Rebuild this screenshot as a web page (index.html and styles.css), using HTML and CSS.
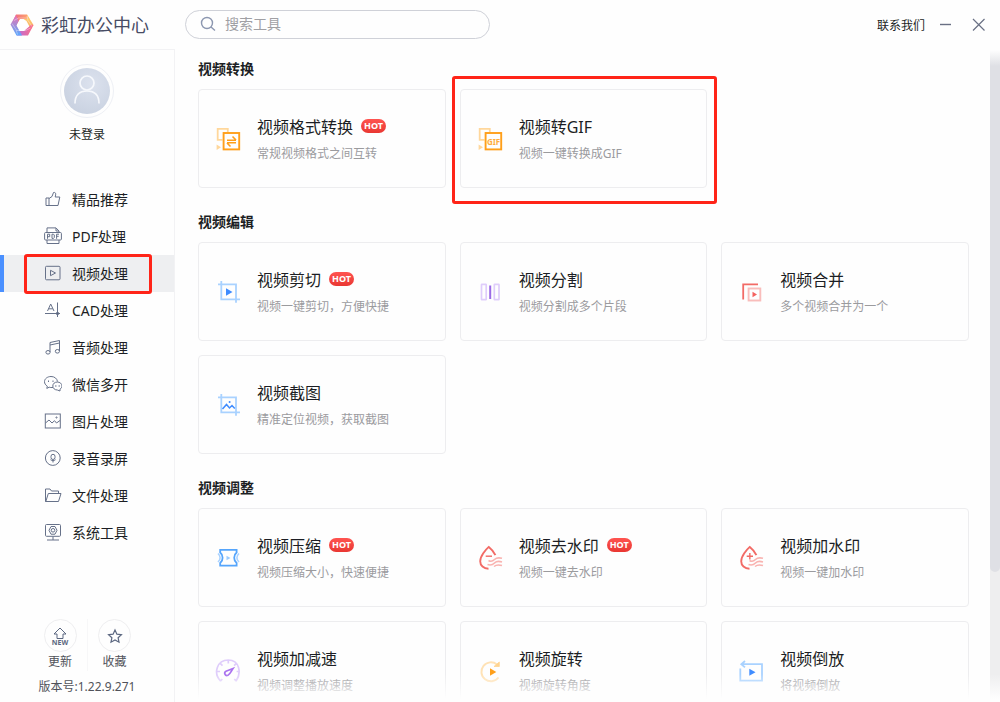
FILE: index.html
```html
<!DOCTYPE html>
<html lang="zh-CN">
<head>
<meta charset="utf-8">
<meta name="viewport" content="width=device-width, initial-scale=1">
<title>彩虹办公中心</title>
<link rel="stylesheet" href="styles.css">
</head>
<body>
<svg class="defs" aria-hidden="true">
  <defs>
    <symbol id="crop" viewBox="0 0 28 28"><path d="M7.3 3V21.3H26M4 6.3H22V24.7" fill="none" stroke="#a9d2ff" stroke-width="1.8"/></symbol>
    <symbol id="frames" viewBox="0 0 28 28"><path d="M8.5 14.8H3.7V3.9H13.8V7" fill="none" stroke="#ffd79b" stroke-width="1.8"/><path d="M2.6 19.5L7 22.2L2.6 25Z" fill="#ffd79b"/><rect x="9.6" y="8" width="15.6" height="16.4" fill="none" stroke="#ff9f1a" stroke-width="1.9"/></symbol>
    <symbol id="drop" viewBox="0 0 28 28"><path d="M19.4 11.2C18 8 15 4.600 12.800 2.900C9.500 5.800 4.200 12.200 4.200 17.200C4.200 21.500 7.600 24.600 12.500 24.800" fill="none" stroke="#f26b66" stroke-width="1.900"/><path d="M12.500 16.500C15 18 16.500 17.500 18.500 15.500S23 13.500 26 14.300M11.500 20.500C14.500 21.500 16.500 21 18.500 19S23 17 26 18M18 22.500C20 20.800 23 20.600 26 21.600" fill="none" stroke="#f9b3b0" stroke-width="1.600"/></symbol>
  </defs>
</svg>
<div class="app">
  <header class="topbar">
    <div class="brand">
      <svg width="24" height="24" viewBox="0 0 24 24" aria-hidden="true">
        <defs>
          <linearGradient id="lg1" x1="0" y1="0" x2="1" y2="0"><stop offset="0" stop-color="#f0677f"/><stop offset="1" stop-color="#ffac6c"/></linearGradient>
          <linearGradient id="lg2" x1="0" y1="0" x2="0" y2="1"><stop offset="0" stop-color="#ffd667"/><stop offset="1" stop-color="#f8ac6c"/></linearGradient>
          <linearGradient id="lg3" x1="0" y1="0" x2="1" y2="0"><stop offset="0" stop-color="#b068ea"/><stop offset="1" stop-color="#ff7182"/></linearGradient>
          <linearGradient id="lg4" x1="0" y1="0" x2="0" y2="1"><stop offset="0" stop-color="#ee70b0"/><stop offset="1" stop-color="#59a9ff"/></linearGradient>
        </defs>
        <path d="M6 1.500H17L19.500 6H10L6.500 12.500L3.500 7Z" fill="url(#lg1)"/>
        <path d="M17 1.500L23.500 12L21 16.500L16.500 8L13.500 6H18Z" fill="url(#lg2)"/>
        <path d="M21.500 11.500L23.500 12L18 22.500H7L5 18H14Z" fill="url(#lg3)"/>
        <path d="M6 2L0.500 11.500L6.500 22.500H12L6.500 12.500L8.500 8Z" fill="url(#lg4)"/>
        <path d="M9.500 7.200H14.500L17.200 12L14.500 16.800H9.500L6.800 12Z" fill="#fff"/>
        <path d="M4 7.500L8.500 5H18M17 3L18 7.500L22 13.500M20.500 15L15.500 17.500H6.500M7.500 21.500L6 16.500L2 10.500" fill="none" stroke="#fff" stroke-width=".6" opacity=".6"/>
      </svg>
      <span>彩虹办公中心</span>
    </div>
    <label class="search">
      <svg width="16" height="16" viewBox="0 0 16 16" fill="none" stroke="#8c97b0" stroke-width="1.400" aria-hidden="true"><circle cx="7" cy="7" r="5.500"/><path d="M11 11L15 14.500"/></svg>
      <input type="search" placeholder="搜索工具" aria-label="搜索工具">
    </label>
    <div class="window-actions">
      <a href="#contact">联系我们</a>
      <button type="button" aria-label="最小化"><svg width="14" height="14" viewBox="0 0 14 14" stroke="#697084" stroke-width="1.400"><path d="M1 6.500H12"/></svg></button>
      <button type="button" aria-label="关闭"><svg width="14" height="14" viewBox="0 0 14 14" stroke="#697084" stroke-width="1.200"><path d="M1 1L12.500 12.500M12.500 1L1 12.500"/></svg></button>
    </div>
  </header>

  <aside class="sidebar">
    <button type="button" class="profile">
      <span class="avatar"><svg width="46" height="46" viewBox="0 0 46 46" fill="none" stroke="#f6f8fc" stroke-width="1.700" aria-hidden="true"><circle cx="23" cy="15" r="7"/><path d="M11 35.500C11 27 15.500 23 23 23S35 27 35 35.500"/></svg></span>
      <span>未登录</span>
    </button>
    <nav class="menu" aria-label="工具分类">
      <a href="#featured"><svg viewBox="0 0 18 18"><path d="M2 8H5V15.500H2ZM5 8.500L8 6.500L9.500 2.500C12 2 12 4 11.200 7H15.800L14 15.500H5"/></svg>精品推荐</a>
      <a href="#pdf"><svg viewBox="0 0 18 18"><path d="M3 5V.900H12L15 4V5M12 1V4H15M3 13V16.500H15V13"/><rect x=".600" y="5.500" width="16.800" height="7.500" rx="1"/><path d="M3.500 11.800V7.200H5.700V9.700H3.500M8 7.200V11.400H9.500L10.300 10.500V8L9.500 7.200ZM12.600 11.800V7.200H15M12.600 9.300H14.700"/></svg>PDF处理</a>
      <a href="#video" class="active" aria-current="page"><svg viewBox="0 0 18 18"><rect x="1.500" y="2.300" width="14.500" height="13.500" rx="1"/><path d="M6.500 6.300V11.700L11.500 9Z"/></svg>视频处理</a>
      <a href="#cad"><svg viewBox="0 0 18 18"><path d="M1 12.500H16M13.500 1.500V16M3.500 10L6.700 3L10 10M4.600 7.800H8.800"/><circle cx="13.500" cy="12.500" r="1.200" fill="#5b6780"/></svg>CAD处理</a>
      <a href="#audio"><svg viewBox="0 0 18 18"><path d="M6 14V4.500L15.500 2.500V13M6 7L15.500 5"/><ellipse cx="4" cy="14.300" rx="2.100" ry="1.800"/><ellipse cx="13.400" cy="13.300" rx="2.100" ry="1.800"/></svg>音频处理</a>
      <a href="#wechat"><svg viewBox="0 0 18 18"><path d="M9 12.500C7.500 12.700 6 12.500 5.200 12.200L2.800 13.400L3.300 11.200C1.500 10 .500 8.500 .500 6.700C.500 3.800 3.400 1.500 7 1.500C10.500 1.500 13 3.500 13.500 6.500"/><path d="M13.300 7C10.800 7 8.800 8.700 8.800 11C8.800 13.300 10.800 15 13.300 15L16 16V14.200C17.200 13.400 18 12.300 18 11C18 8.700 15.800 7 13.300 7Z"/><path d="M4.500 5.500V7M9 5.500V7M11 11H12.500M14.500 11H16"/></svg>微信多开</a>
      <a href="#image"><svg viewBox="0 0 18 18"><rect x="1.300" y="2" width="15" height="14"/><path d="M1.500 11L5 8L8 11L10.500 8.700L12.500 11L16 8.500"/><circle cx="12.500" cy="5.500" r=".600"/></svg>图片处理</a>
      <a href="#record"><svg viewBox="0 0 18 18"><circle cx="8.800" cy="9" r="7.400"/><path d="M7 7.300A2 2 0 0 1 11 7.300V8.500A2 2 0 0 1 7 8.500ZM6.500 10.700C8 12 10 12 11.500 10.700M9 11.500V13.500"/></svg>录音录屏</a>
      <a href="#files"><svg viewBox="0 0 18 18"><path d="M3 15.500H1.500V3H6L7.500 5H14.500V7.500M1.800 15.500L4.300 7.500H17L14.500 15.500Z"/></svg>文件处理</a>
      <a href="#system"><svg viewBox="0 0 18 18"><rect x="1.500" y="1.500" width="15" height="11.800" rx="1"/><path d="M9 13.500V17M3 17H15M7 3.500H11L13 7.300L11 11.200H7L5 7.300Z"/><circle cx="9" cy="7.300" r="1.800"/></svg>系统工具</a>
    </nav>
    <footer class="side-footer">
      <div class="quick">
        <button type="button"><span class="round"><svg width="20" height="20" viewBox="0 0 20 20" fill="none" stroke="#5b6780" aria-hidden="true"><path d="M10 2L4 8H7V12.500H13V8H16Z"/><text x="10" y="18.500" class="new-mark">NEW</text></svg></span>更新</button>
        <button type="button"><span class="round"><svg width="20" height="20" viewBox="0 0 20 20" fill="none" stroke="#5b6780" stroke-width="1.200" aria-hidden="true"><path d="M10 4L11.900 8.200L16.400 8.700L13.100 11.700L14 16.200L10 14L6 16.200L6.900 11.700L3.600 8.700L8.100 8.200Z"/></svg></span>收藏</button>
      </div>
      <div class="version">版本号:1.22.9.271</div>
    </footer>
  </aside>

  <main class="content">
    <div class="scroll">
      <section>
        <h2>视频转换</h2>
        <div class="cards">
          <a class="card" href="#convert"><svg viewBox="0 0 28 28"><use href="#frames"/><path d="M13 15.200H22M18.500 11.500L22 15M22 17.700H13M16.500 21.500L13 18" fill="none" stroke="#ff9f1a" stroke-width="1.600"/></svg><div><h3>视频格式转换<span class="hot">HOT</span></h3><p>常规视频格式之间互转</p></div></a>
          <a class="card marked" href="#gif"><svg viewBox="0 0 28 28"><use href="#frames"/><text x="17.600" y="19.600" class="gif-mark">GIF</text></svg><div><h3>视频转GIF</h3><p>视频一键转换成GIF</p></div></a>
        </div>
      </section>
      <section>
        <h2>视频编辑</h2>
        <div class="cards">
          <a class="card" href="#cut"><svg viewBox="0 0 28 28"><use href="#crop"/><path d="M12 10.300L18.500 14L12 17.700Z" fill="#3f8cff"/></svg><div><h3>视频剪切<span class="hot">HOT</span></h3><p>视频一键剪切，方便快捷</p></div></a>
          <a class="card" href="#split"><svg viewBox="0 0 28 28" fill="none" stroke="#dfcdfb" stroke-width="1.700"><rect x="5.500" y="6.300" width="4.700" height="15.400" rx=".5"/><rect x="18.300" y="6.300" width="4.700" height="15.400" rx=".5"/><path d="M14.200 7.500V21" stroke="#9b6be6" stroke-width="2"/></svg><div><h3>视频分割</h3><p>视频分割成多个片段</p></div></a>
          <a class="card" href="#merge"><svg viewBox="0 0 28 28" fill="none"><path d="M6.200 21.500V6.300H21" stroke="#f26b66" stroke-width="1.800"/><rect x="11.600" y="10.500" width="11.700" height="12" stroke="#f9bdbb" stroke-width="1.900"/><path d="M15.500 13.700L20 16.500L15.500 19.300Z" fill="#f4625f"/></svg><div><h3>视频合并</h3><p>多个视频合并为一个</p></div></a>
          <a class="card" href="#capture"><svg viewBox="0 0 28 28"><use href="#crop"/><path d="M8.500 18L12.500 13.500L15.500 17L18 14.500L20.800 17.500" fill="none" stroke="#3f8cff" stroke-width="1.500"/><circle cx="15.600" cy="11" r="1" fill="#3f8cff"/></svg><div><h3>视频截图</h3><p>精准定位视频，获取截图</p></div></a>
        </div>
      </section>
      <section>
        <h2>视频调整</h2>
        <div class="cards">
          <a class="card" href="#compress"><svg viewBox="0 0 28 28" fill="none"><path d="M6.200 5.900H22.600V8.500C19.400 11 19.400 16.500 22.600 19V21.700H6.200V19C9.400 16.500 9.400 11 6.200 8.500Z" stroke="#55a5fc" stroke-width="1.800"/><path d="M4 9.500C6.800 12 6.800 15.500 4 18M25 9.500C22.200 12 22.200 15.500 25 18" stroke="#a9d2ff" stroke-width="1.600"/><path d="M12.500 11.800L16.500 14L12.500 16.200Z" fill="#9cccff"/></svg><div><h3>视频压缩<span class="hot">HOT</span></h3><p>视频压缩大小，快速便捷</p></div></a>
          <a class="card" href="#unmark"><svg viewBox="0 0 28 28"><use href="#drop"/><path d="M9.700 12.200H16" stroke="#f26b66" stroke-width="1.400"/></svg><div><h3>视频去水印<span class="hot">HOT</span></h3><p>视频一键去水印</p></div></a>
          <a class="card" href="#watermark"><svg viewBox="0 0 28 28"><use href="#drop"/><path d="M9.700 12.200H16M12.850 9V15.400" stroke="#f26b66" stroke-width="1.400"/></svg><div><h3>视频加水印</h3><p>视频一键加水印</p></div></a>
          <a class="card" href="#speed"><svg viewBox="0 0 28 28" fill="none" stroke="#dfcdfb" stroke-width="1.700"><path d="M6.500 24C-1 16 3 3 14.300 3S27.600 16 22.100 24M6.500 24L8.300 22M22.100 24L20.300 22M14.300 3V6.500M3 14.500H6M22.600 14.500H25.600M6.500 6.700L8.500 8.700M22.100 6.700L20.100 8.700"/><path d="M19 11.500L12 14.200C9.500 15.500 11 19.500 14 18.200C16 17.300 17 14.500 19 11.500Z" stroke="#aa72ef"/></svg><div><h3>视频加减速</h3><p>视频调整播放速度</p></div></a>
          <a class="card" href="#rotate"><svg viewBox="0 0 28 28" fill="none"><path d="M22.500 20.500A9.500 9.500 0 1 1 21 7.500" stroke="#ffe2b5" stroke-width="1.900"/><path d="M23.300 5V9.500H18Z" fill="#ffd490" stroke="#ffd490" stroke-width=".8"/><path d="M14 11.300L20.300 15L14 18.700Z" fill="#ff9f1a"/></svg><div><h3>视频旋转</h3><p>视频旋转角度</p></div></a>
          <a class="card" href="#reverse"><svg viewBox="0 0 28 28" fill="none"><path d="M3.300 11.500V23.700H25V7.200H4.500M8 4L4.300 7.200L8 10.400" stroke="#a9d2ff" stroke-width="1.800"/><path d="M12.300 11.800L18.500 15.300L12.300 18.800Z" fill="#3f8cff"/></svg><div><h3>视频倒放</h3><p>将视频倒放</p></div></a>
        </div>
      </section>
    </div>
    <div class="track" aria-hidden="true"><div class="thumb"></div></div>
  </main>
</div>
</body>
</html>
```
FILE: styles.css
```css
* { box-sizing: border-box; }

body {
  margin: 0;
  background: #fefefe;
  color: #1c1e24;
  font-family: "Noto Sans", "Noto Sans CJK SC", sans-serif;
  font-size: 14px;
}

h2, h3, p { margin: 0; }
a { color: inherit; text-decoration: none; }
button {
  border: 0;
  padding: 0;
  background: none;
  color: inherit;
  font: inherit;
  cursor: pointer;
}
svg { display: block; flex: none; }
.defs { position: absolute; width: 0; height: 0; }

.app {
  display: grid;
  grid-template: 50px minmax(0, 1fr) / 175px minmax(0, 1fr);
  height: 100vh;
}

.topbar {
  grid-column: 1 / -1;
  display: flex;
  align-items: center;
}
.brand {
  display: flex;
  align-items: center;
  align-self: stretch;
  gap: 7px;
  width: 175px;
  padding-left: 10px;
  border-bottom: 1px solid #f2f2f4;
  color: #474c64;
  font-size: 18px;
  line-height: 24px;
}
.search {
  display: flex;
  align-items: center;
  gap: 9px;
  width: 305px;
  height: 29px;
  margin: 0 0 2px 10px;
  padding: 0 14px;
  border: 1px solid #cfd1d8;
  border-radius: 15px;
}
.search input {
  flex: 1;
  min-width: 0;
  border: 0;
  padding: 0;
  outline: 0;
  background: none;
  color: #1c1e24;
  font: inherit;
  line-height: 20px;
}
.search input::placeholder { color: #a0a0a4; }
.window-actions {
  display: flex;
  align-items: center;
  gap: 19px;
  margin-left: auto;
  padding-right: 14px;
  font-size: 12px;
}
.window-actions a { margin-right: -5px; }

.sidebar {
  display: flex;
  flex-direction: column;
  border-right: 1px solid #f2f2f4;
}
.profile {
  display: flex;
  flex-direction: column;
  align-items: center;
  gap: 8px;
  padding-top: 14px;
  font-size: 12px;
  line-height: 18px;
}
.avatar {
  padding: 3px;
  border: 1px solid #eef0f5;
  border-radius: 50%;
}
.avatar svg {
  border-radius: 50%;
  background: radial-gradient(circle at 60% 35%, #dce2ee, #c4cddd);
}

.menu { padding-top: 37px; }
.menu a {
  display: flex;
  align-items: center;
  gap: 10px;
  height: 37px;
  padding: 0 0 1px 44px;
}
.menu svg {
  width: 18px;
  height: 18px;
  fill: none;
  stroke: #667189;
  stroke-width: 1;
}
.menu .active {
  position: relative;
  background: #eeeff1;
  box-shadow: inset 4px 0 #4a90ff;
}
.menu .active::after,
.marked::after {
  content: "";
  position: absolute;
  border: 3px solid #ff2418;
  border-radius: 3px;
  pointer-events: none;
}
.menu .active::after { inset: -1px 22px -2px 24px; }

.side-footer {
  margin-top: auto;
  padding-bottom: 6px;
  color: #50525a;
  font-size: 12px;
  line-height: 18px;
}
.quick { display: flex; justify-content: center; }
.quick button {
  display: grid;
  justify-items: center;
  gap: 1px;
  width: 54px;
}
.quick button + button { border-left: 1px solid #f7f7f8; }
.round {
  display: grid;
  place-items: center;
  width: 33px;
  height: 33px;
  border: 1px solid #eeeef0;
  border-radius: 50%;
}
.new-mark {
  fill: #5b6780;
  stroke: none;
  font-size: 7px;
  font-weight: 700;
  text-anchor: middle;
}
.version { padding-top: 7px; text-align: center; }

.content {
  position: relative;
  display: flex;
  min-height: 0;
}
.content::after {
  content: "";
  position: absolute;
  inset: auto 0 0;
  height: 28px;
  background: linear-gradient(#fefefe00, #fefefe 90%);
  pointer-events: none;
}
.scroll {
  flex: 1;
  overflow-y: auto;
  scrollbar-width: none;
  padding: 9px 21px 24px 23px;
}
.scroll section + section { margin-top: 24px; }
.scroll h2 {
  margin-bottom: 10px;
  font-size: 14px;
  font-weight: 700;
  line-height: 20px;
}
.cards {
  display: grid;
  grid-template-columns: repeat(3, minmax(0, 1fr));
  gap: 14px;
}
.card {
  position: relative;
  display: flex;
  align-items: center;
  gap: 15px;
  padding: 25px 15px 24px;
  border: 1px solid #ededef;
  border-radius: 4px;
}
.card > svg { width: 28px; height: 28px; }
.card h3 {
  display: flex;
  align-items: center;
  gap: 8px;
  font-size: 16px;
  font-weight: 400;
  line-height: 24px;
}
.card p {
  margin-top: 6px;
  color: #9b9b9e;
  font-size: 12px;
  line-height: 18px;
}
.marked::after { inset: -14px -11px -17px -9px; }
.gif-mark {
  fill: #ffad3d;
  font-size: 8px;
  font-weight: 700;
  text-anchor: middle;
}
.hot {
  margin-bottom: 2px;
  padding: 0 3px;
  border-radius: 7px;
  background: linear-gradient(#ff5450, #e93732);
  color: #fff;
  font-size: 9px;
  font-weight: 700;
  line-height: 14px;
}
.track {
  width: 10px;
  background: #eeeeef;
}
.thumb {
  height: 80%;
  border-radius: 0 0 5px 5px;
  background: linear-gradient(#fefefe, #dfe0e5 16px);
}
```
